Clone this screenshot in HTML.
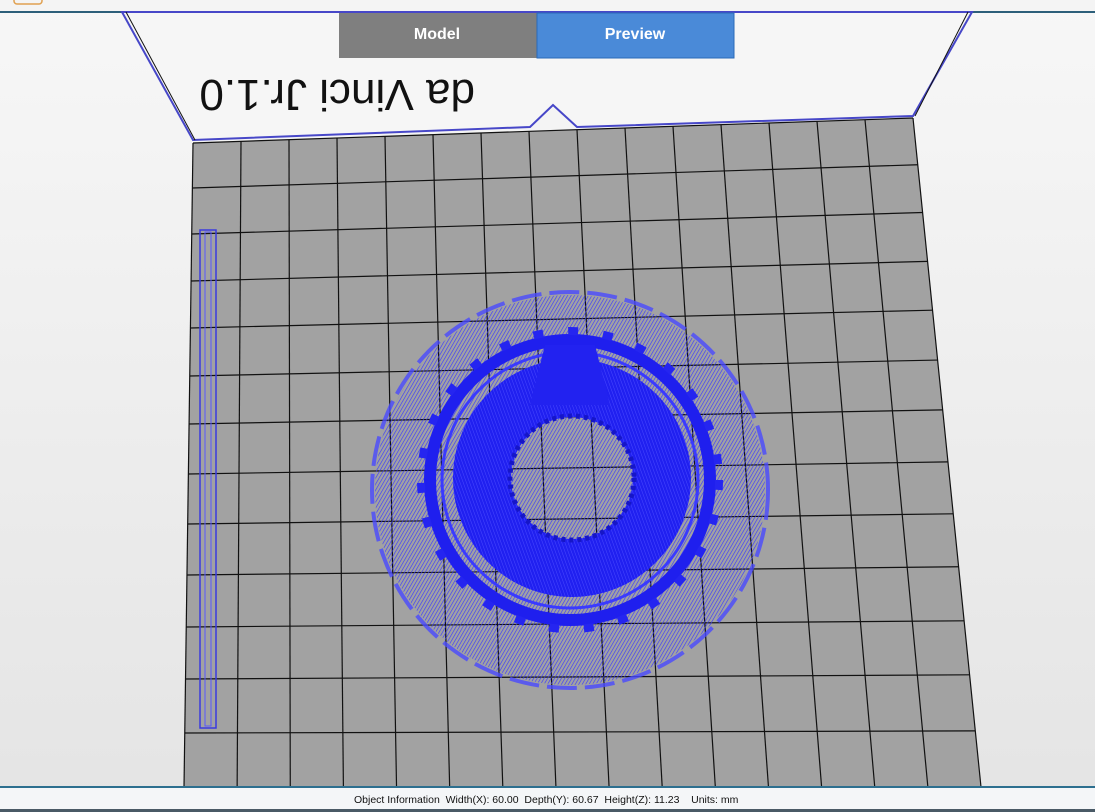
<!DOCTYPE html>
<html><head><style>
body{margin:0;width:1095px;height:812px;overflow:hidden;background:#f0f0f0;font-family:"Liberation Sans",Arial,sans-serif}
</style></head><body>
<svg width="1095" height="812" style="position:absolute;left:0;top:0">
<defs>
<linearGradient id="bg" x1="0" y1="0" x2="0" y2="1"><stop offset="0" stop-color="#f7f7f7"/><stop offset="1" stop-color="#e4e4e4"/></linearGradient>
<pattern id="hatch" width="3" height="3" patternUnits="userSpaceOnUse" patternTransform="rotate(30)"><line x1="0" y1="0" x2="0" y2="3" stroke="#3a3aff" stroke-width="1.3"/></pattern>
<pattern id="hatch2" width="3" height="3" patternUnits="userSpaceOnUse" patternTransform="rotate(-20)"><rect width="3" height="3" fill="#2020f0"/><line x1="0" y1="0" x2="0" y2="3" stroke="#4848ff" stroke-width="1"/></pattern>
</defs>
<rect width="1095" height="812" fill="url(#bg)"/>
<rect width="1095" height="12" fill="#f4f4f4"/>
<rect x="14" y="-6" width="28" height="10" rx="3" fill="none" stroke="#e0a050" stroke-width="1.5"/>
<rect y="11" width="1095" height="2" fill="#2d5f7a"/>
<polygon points="122,12 193,140 530,127 553,105 577,127 913,116 972,12" fill="#f6f6f6" stroke="#4747c8" stroke-width="2"/>
<polyline points="126,12 195,140" stroke="#111" fill="none" stroke-width="1"/>
<polyline points="968,12 915,116" stroke="#111" fill="none" stroke-width="1"/>
<text x="0" y="0" transform="translate(475,80) rotate(180)" font-size="44" fill="#111" font-family="Liberation Sans">da Vinci Jr.1.0</text>
<polygon points="193,143 913,118 981,787 184,787" fill="#a2a2a2"/>
<g id="grid" stroke="#111" stroke-width="1.2" fill="none"></g>
<rect x="200" y="230" width="16" height="498" fill="none" stroke="#3a3ae0" stroke-width="1.5"/>
<rect x="205" y="232" width="6" height="494" fill="none" stroke="#5858ff" stroke-width="1"/>
<circle cx="570" cy="490" r="195" fill="url(#hatch)"/>
<circle cx="570" cy="490" r="198" fill="none" stroke="#4a4aff" stroke-width="4" stroke-dasharray="30 8" opacity="0.8"/>
<circle cx="570" cy="480" r="140" fill="none" stroke="#1f1fee" stroke-width="12"/>
<circle cx="570" cy="480" r="128" fill="none" stroke="#3a3aff" stroke-width="3"/>
<circle cx="570" cy="480" r="149" fill="none" stroke="#2525f0" stroke-width="8" stroke-dasharray="10 25"/>
<circle cx="572" cy="478" r="90" fill="none" stroke="url(#hatch2)" stroke-width="58"/>
<circle cx="572" cy="478" r="62" fill="none" stroke="#1616c8" stroke-width="5" stroke-dasharray="4 4"/>
<polygon points="545,345 595,345 610,405 530,405" fill="#2222f0"/>
<rect y="786" width="1095" height="2.5" fill="#2d6f8f"/>
<rect y="788" width="1095" height="22" fill="#f4f6f8"/>
<rect y="809" width="1095" height="3" fill="#4a5a66"/>
<text x="354" y="803" font-size="10.5" fill="#111" xml:space="preserve" style="white-space:pre">Object Information  Width(X): 60.00  Depth(Y): 60.67  Height(Z): 11.23    Units: mm</text>
<rect x="339" y="13" width="198" height="45" fill="#7f7f7f"/>
<rect x="537" y="13" width="197" height="45" fill="#4a8ad8" stroke="#2a6ab8"/>
<text x="437" y="39" font-size="16" font-weight="bold" fill="#fff" text-anchor="middle">Model</text>
<text x="635" y="39" font-size="16" font-weight="bold" fill="#fff" text-anchor="middle">Preview</text>
</svg>
<script>
var g=document.getElementById('grid'),s='';
var TL=[193,143],TR=[913,118],BR=[981,787],BL=[184,787];
function P(u,v){var tx=TL[0]+(TR[0]-TL[0])*u,ty=TL[1]+(TR[1]-TL[1])*u,bx=BL[0]+(BR[0]-BL[0])*u,by=BL[1]+(BR[1]-BL[1])*u;return[tx+(bx-tx)*v,ty+(by-ty)*v];}
var rows=[0,45,91,138,185,233,281,331,381,432,484,536,590,644];
for(var i=0;i<=15;i++){var a=P(i/15,0),b=P(i/15,1);s+='<line x1="'+a[0]+'" y1="'+a[1]+'" x2="'+b[0]+'" y2="'+b[1]+'"/>';}
for(var j=0;j<rows.length;j++){var v=rows[j]/644;var a=P(0,v),b=P(1,v);s+='<line x1="'+a[0]+'" y1="'+a[1]+'" x2="'+b[0]+'" y2="'+b[1]+'"/>';}
g.innerHTML=s;
</script>
</body></html>
